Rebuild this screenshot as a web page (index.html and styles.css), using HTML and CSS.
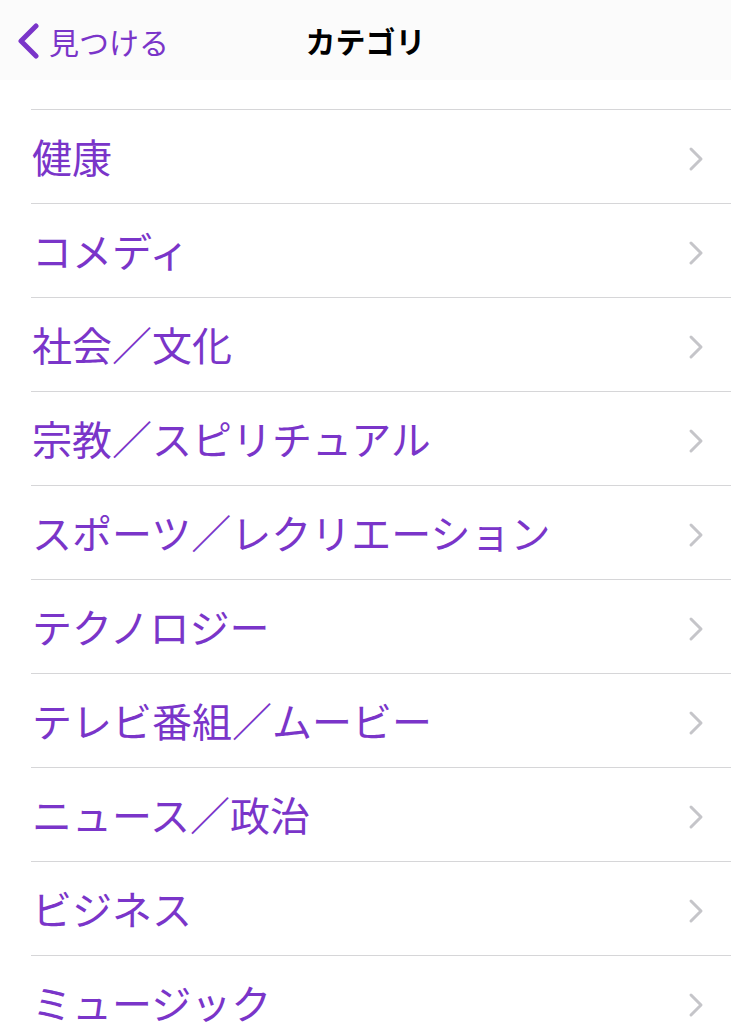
FILE: index.html
```html
<!DOCTYPE html>
<html lang="ja">
<head>
  <meta charset="UTF-8">
  <meta name="viewport" content="width=device-width, initial-scale=1.0">
  <title>カテゴリ</title>
  <link rel="stylesheet" href="styles.css">
</head>
<body>
  <header class="navbar">
    <a class="back" href="#">
      <svg class="back-icon" width="26" height="36" viewBox="0 0 26 36">
        <path d="M21 3 L6 18 L21 33" fill="none" stroke="currentColor" stroke-width="5" stroke-linecap="round" stroke-linejoin="round"/>
      </svg>
      <span>見つける</span>
    </a>
    <h1 class="title">カテゴリ</h1>
  </header>

  <ul class="categories">
    <li class="row"><span>健康</span><svg class="chevron" width="16" height="26" viewBox="0 0 16 26"><path d="M3 3 L13 13 L3 23" fill="none" stroke="currentColor" stroke-width="3" stroke-linecap="round" stroke-linejoin="round"/></svg></li>
    <li class="row"><span>コメディ</span><svg class="chevron" width="16" height="26" viewBox="0 0 16 26"><path d="M3 3 L13 13 L3 23" fill="none" stroke="currentColor" stroke-width="3" stroke-linecap="round" stroke-linejoin="round"/></svg></li>
    <li class="row"><span>社会／文化</span><svg class="chevron" width="16" height="26" viewBox="0 0 16 26"><path d="M3 3 L13 13 L3 23" fill="none" stroke="currentColor" stroke-width="3" stroke-linecap="round" stroke-linejoin="round"/></svg></li>
    <li class="row"><span>宗教／スピリチュアル</span><svg class="chevron" width="16" height="26" viewBox="0 0 16 26"><path d="M3 3 L13 13 L3 23" fill="none" stroke="currentColor" stroke-width="3" stroke-linecap="round" stroke-linejoin="round"/></svg></li>
    <li class="row"><span>スポーツ／レクリエーション</span><svg class="chevron" width="16" height="26" viewBox="0 0 16 26"><path d="M3 3 L13 13 L3 23" fill="none" stroke="currentColor" stroke-width="3" stroke-linecap="round" stroke-linejoin="round"/></svg></li>
    <li class="row"><span>テクノロジー</span><svg class="chevron" width="16" height="26" viewBox="0 0 16 26"><path d="M3 3 L13 13 L3 23" fill="none" stroke="currentColor" stroke-width="3" stroke-linecap="round" stroke-linejoin="round"/></svg></li>
    <li class="row"><span>テレビ番組／ムービー</span><svg class="chevron" width="16" height="26" viewBox="0 0 16 26"><path d="M3 3 L13 13 L3 23" fill="none" stroke="currentColor" stroke-width="3" stroke-linecap="round" stroke-linejoin="round"/></svg></li>
    <li class="row"><span>ニュース／政治</span><svg class="chevron" width="16" height="26" viewBox="0 0 16 26"><path d="M3 3 L13 13 L3 23" fill="none" stroke="currentColor" stroke-width="3" stroke-linecap="round" stroke-linejoin="round"/></svg></li>
    <li class="row"><span>ビジネス</span><svg class="chevron" width="16" height="26" viewBox="0 0 16 26"><path d="M3 3 L13 13 L3 23" fill="none" stroke="currentColor" stroke-width="3" stroke-linecap="round" stroke-linejoin="round"/></svg></li>
    <li class="row"><span>ミュージック</span><svg class="chevron" width="16" height="26" viewBox="0 0 16 26"><path d="M3 3 L13 13 L3 23" fill="none" stroke="currentColor" stroke-width="3" stroke-linecap="round" stroke-linejoin="round"/></svg></li>
  </ul>
</body>
</html>
```

FILE: styles.css
```css
body {
  margin: 0;
  background: #fff;
  font-family: "Noto Sans CJK JP", "Noto Sans", sans-serif;
  overflow: hidden;
}

.navbar {
  height: 80px;
  background-color: #fbfbfb;
  display: flex;
  align-items: center;
  justify-content: center;
  position: relative;
}

.back {
  position: absolute;
  left: 15px;
  top: 23px;
  display: flex;
  align-items: center;
  gap: 8px;
  color: #7a35c9;
  text-decoration: none;
  font-size: 30px;
  line-height: 36px;
}

.back-icon {
  display: block;
}

.title {
  margin: 0;
  font-size: 30px;
  font-weight: 600;
  color: #000;
  margin-top: -1px;
}

.categories {
  list-style: none;
  margin: 29px 0 0 31px;
  padding: 0;
  border-top: 1px solid #d6d6d8;
}

.row {
  height: 93px;
  border-bottom: 1px solid #d6d6d8;
  display: flex;
  align-items: center;
  justify-content: space-between;
  padding-right: 27px;
  color: #7a35c9;
  font-size: 40px;
}

.row span {
  margin-left: 1px;
  margin-top: -2px;
}

.chevron {
  color: #c5c5c9;
  display: block;
  margin-top: 5px;
}
```
